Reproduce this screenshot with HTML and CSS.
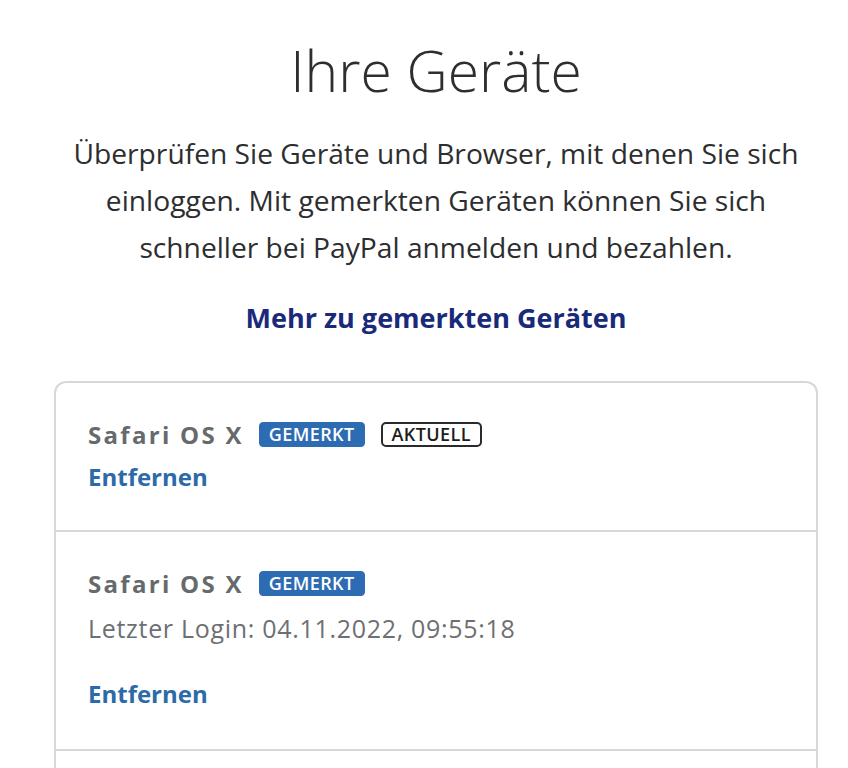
FILE: index.html
```html
<!DOCTYPE html>
<html lang="de">
<head>
<meta charset="utf-8">
<link rel="stylesheet" href="styles.css">
</head>
<body>
<main class="page">
  <h1 class="title">Ihre Geräte</h1>
  <p class="intro">Überprüfen Sie Geräte und Browser, mit denen Sie sich einloggen. Mit gemerkten Geräten können Sie sich schneller bei PayPal anmelden und bezahlen.</p>
  <a class="more" href="#">Mehr zu gemerkten Geräten</a>
  <section class="card">
    <div class="row row-first">
      <div class="device">
        <span class="name">Safari OS X</span>
        <span class="badge badge-blue">GEMERKT</span>
        <span class="badge badge-outline">AKTUELL</span>
      </div>
      <a class="remove" href="#">Entfernen</a>
    </div>
    <div class="row row-second">
      <div class="device">
        <span class="name">Safari OS X</span>
        <span class="badge badge-blue">GEMERKT</span>
      </div>
      <div class="login">Letzter Login: 04.11.2022, 09:55:18</div>
      <a class="remove remove-spaced" href="#">Entfernen</a>
    </div>
    <div class="row row-third"></div>
  </section>
</main>
</body>
</html>
```

FILE: styles.css
```css
html, body {
  margin: 0;
  padding: 0;
  background: #ffffff;
}
body {
  font-family: "Open Sans", "Noto Sans", sans-serif;
  color: #2c2e2f;
}
.page {
  display: flex;
  flex-direction: column;
  align-items: center;
  padding: 34px 20px 0 44px;
}
.title {
  margin: 0;
  font-size: 57px;
  font-weight: 300;
  line-height: 72px;
  color: #2c2e2f;
}
.intro {
  margin: 24px 0 0;
  width: 760px;
  text-align: center;
  font-size: 28.2px;
  line-height: 47px;
  color: #2c2e2f;
}
.more {
  margin-top: 29px;
  font-size: 27px;
  font-weight: 700;
  color: #1a2a7a;
  text-decoration: none;
  line-height: 36px;
}
.card {
  margin-top: 45px;
  width: 760px;
  border: 2px solid #d8d8d8;
  border-bottom: none;
  border-radius: 12px 12px 0 0;
  display: flex;
  flex-direction: column;
}
.row {
  padding: 0 32px;
  border-bottom: 2px solid #d8d8d8;
  display: flex;
  flex-direction: column;
}
.row-first {
  padding-top: 36px;
  height: 111px;
}
.row-second {
  padding-top: 36px;
  height: 181px;
}
.row-third {
  height: 40px;
  border-bottom: none;
}
.device {
  display: flex;
  align-items: center;
  height: 30px;
}
.name {
  font-size: 24px;
  font-weight: 700;
  letter-spacing: 2.3px;
  color: #666a6d;
  margin-right: 15px;
}
.badge {
  font-size: 18px;
  font-weight: 600;
  line-height: 23px;
  padding: 0 9px;
  border-radius: 4px;
  letter-spacing: 0.4px;
}
.badge-blue {
  background: #2d6bb3;
  color: #ffffff;
  border: 1px solid #2d6bb3;
}
.badge-outline {
  margin-left: 16px;
  background: #ffffff;
  color: #1c1c1c;
  border: 2px solid #2a2a2a;
  border-radius: 5px;
  line-height: 21px;
}
.remove {
  margin-top: 12px;
  font-size: 24px;
  font-weight: 700;
  color: #2c6aa8;
  text-decoration: none;
  line-height: 32px;
}
.remove-spaced {
  margin-top: 34px;
}
.login {
  margin-top: 14px;
  font-size: 25px;
  letter-spacing: 0.7px;
  line-height: 32px;
  color: #6c7074;
}
```
